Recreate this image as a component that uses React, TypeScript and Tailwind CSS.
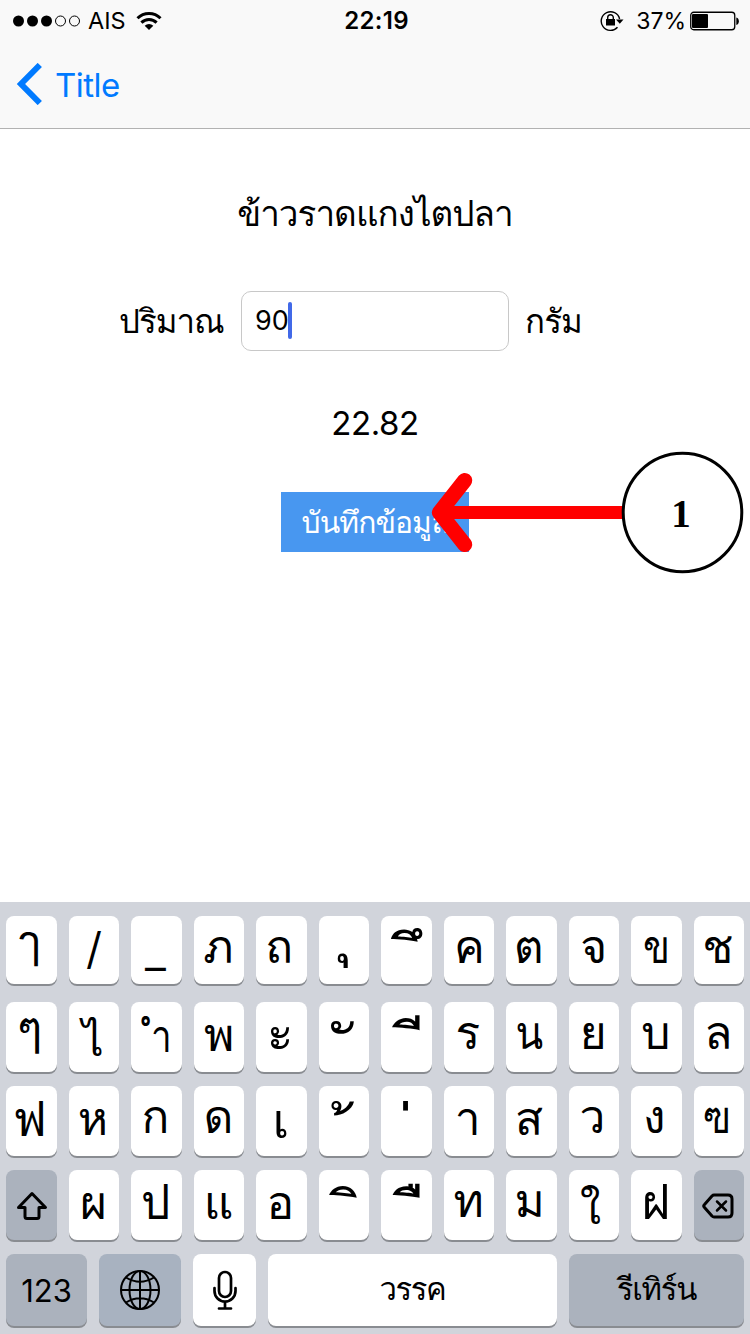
import React from "react";

type Glyph = { ch: string; dx: number; base: number; size: number; sx: number };

// ch, horizontal nudge from the key centre, baseline from the key top, font size, horizontal scale
const g = (ch: string, dx: number, base: number, size = 46, sx = 1): Glyph => ({ ch, dx, base, size, sx });

const rows: Glyph[][] = [
  [
    g("ๅ", -1.6, 42.3), g("/", 0.5, 52.5, 53, 0.7), g("_", 0.2, 46, 46, 0.78), g("ภ", 0, 47),
    g("ถ", -1.7, 47), g("\u00a0ุ", 0.4, 34.6, 65), g("\u00a0ึ", 8.9, 60.8, 58), g("ค", 1, 47),
    g("ต", -2.2, 47), g("จ", 0.5, 47), g("ข", 0.2, 47, 46, 0.86), g("ช", -0.5, 47),
  ],
  [
    g("ๆ", -1.2, 43.3, 48), g("ไ", -0.6, 54.5, 43), g("\u00a0ำ", 0.3, 49.8, 44, 0.84), g("พ", 0.9, 49.7),
    g("ะ", -0.6, 49.5, 50), g("\u00a0ั", 2.1, 69.6, 63), g("\u00a0ี", 10.9, 64.3, 60), g("ร", -0.4, 47.6),
    g("น", -2.1, 47.6, 46, 0.88), g("ย", -0.2, 47.6), g("บ", 0, 47.6), g("ล", 0.1, 47.6),
  ],
  [
    g("ฟ", -1.2, 49.7, 48), g("ห", -0.5, 49.4), g("ก", -0.5, 47.6), g("ด", 0.2, 47.6),
    g("เ", 0, 52.2, 49), g("\u00a0้", 0.1, 81.4, 62), g("\u00a0่", -1, 88, 70), g("า", -0.7, 49.8),
    g("ส", -1.8, 49.8), g("ว", -0.9, 47.6), g("ง", -1.6, 47.6), g("ฃ", -1.1, 47.6, 46, 0.86),
  ],
];
const lastRow: Glyph[] = [
  g("ผ", 0.2, 49.5), g("ป", -0.5, 49.7, 49, 0.94), g("แ", 0.3, 49.7), g("อ", -0.5, 49.5), g("\u00a0ิ", 10.4, 64.2, 60),
  g("\u00a0ื", 10.9, 64.2, 60), g("ท", 0.3, 47.6), g("ม", -1.3, 47.6), g("ใ", -2.8, 54.5, 43), g("ฝ", 0, 49.7, 49),
];

// Baseline of a zero-height line box set in Loma, as a share of the font size
const LOMA_BASELINE = 0.355;

function Key({ children, className = "" }: { children: React.ReactNode; className?: string }) {
  return (
    <div className={`flex justify-center rounded-lg shadow-[0_2px_0_#898c91] ${className}`}>{children}</div>
  );
}

function Letter({ glyph }: { glyph: Glyph }) {
  const dy = glyph.base - LOMA_BASELINE * glyph.size;
  return (
    <Key className="min-w-0 flex-1 items-start bg-white">
      <span
        className="whitespace-pre font-['Loma',sans-serif] leading-[0]"
        style={{ fontSize: glyph.size, transform: `translate(${glyph.dx - 0.4}px, ${dy}px) scaleX(${glyph.sx})` }}
      >
        {glyph.ch}
      </span>
    </Key>
  );
}

function StatusBar() {
  return (
    <div className="flex h-[41px] items-center text-[23.500px]">
      <div className="flex flex-1 items-center pl-[13px]">
        <svg width="67" height="12" viewBox="0 0 67 12">
          {[5.5, 19.5, 33.5].map((x) => (
            <circle key={x} cx={x} cy="6" r="5.5" />
          ))}
          {[47.5, 61.5].map((x) => (
            <circle key={x} cx={x} cy="6" r="5" fill="none" stroke="#000" />
          ))}
        </svg>
        <span className="ml-2">AIS</span>
        <svg className="ml-2.5" width="26" height="20" viewBox="0 0 26 20" fill="none" stroke="#000" strokeWidth="3">
          <path d="M1.5 7.2A16.3 16.3 0 0 1 24.5 7.2" />
          <path d="M5.4 11.6A10.7 10.7 0 0 1 20.6 11.6" />
          <path d="M8.7 14.8A6.2 6.2 0 0 1 17.3 14.8L13 19Z" fill="#000" stroke="none" />
        </svg>
      </div>
      <span className="pl-px text-[24px] font-semibold tracking-[0.3px]">22:19</span>
      <div className="flex flex-1 items-center justify-end pr-[11px]">
        <svg width="24" height="22" viewBox="0 0 24 22" fill="none" stroke="#000" strokeWidth="1.4">
          <path d="M17.5 17.2A9.3 9.3 0 1 1 19.6 9" />
          <path d="M16 9.5H23.5L19.8 13.7Z" fill="#000" stroke="none" />
          <rect x="6" y="9" width="9" height="6.5" fill="#000" stroke="none" />
          <path d="M7.7 9.5V7.5A2.8 2.8 0 0 1 13.3 7.5V9.5" />
        </svg>
        <span className="ml-3 pt-0.5 text-[23px]">37%</span>
        <svg className="ml-1" width="49" height="20" viewBox="0 0 49 20">
          <rect x="0.75" y="1.25" width="44" height="17.5" rx="3" fill="none" stroke="#000" strokeWidth="1.3" />
          <rect x="2" y="3" width="16" height="14" rx="1" />
          <path d="M46.3 6.5C49.7 7 49.7 13.5 46.3 14Z" />
        </svg>
      </div>
    </div>
  );
}

export default function App() {
  return (
    <div className="relative flex h-[1334px] w-[750px] flex-col overflow-hidden bg-white font-['Inter','Loma',sans-serif] text-black">
      <header className="h-[129px] border-b border-[#b2b2b2] bg-[#f9f9f9]">
        <StatusBar />
        <div className="flex h-[87px] items-center pl-4 text-[#007aff]">
          <svg className="mb-px" width="27" height="42" viewBox="0 0 27 42" fill="none" stroke="currentColor" strokeWidth="6">
            <path d="M23.800 2L5 21L23.800 40" />
          </svg>
          <span className="ml-3 pt-0.5 text-[33px] tracking-[-0.500px]">Title</span>
        </div>
      </header>

      <main className="flex flex-1 flex-col items-center">
        <h1 className="mt-[61px] text-[35px] leading-[46px] tracking-[-0.950px]">ข้าวราดแกงไตปลา</h1>
        <div className="mt-[55px] flex h-[60px] w-full items-center pl-[119px] text-[33px] tracking-[-0.800px]">
          <span className="w-[122px] pt-0.5 tracking-[-1px]">ปริมาณ</span>
          <div className="flex h-[60px] w-[268px] items-center rounded-[10px] border border-[#c8c8c8] pl-[13px] text-[27px] tracking-normal">
            90
            <span className="-ml-px mb-0.5 h-[37px] w-1 rounded-full bg-[#4169e8]" />
          </div>
          <span className="ml-4 pt-0.5">กรัม</span>
        </div>
        <div className="mt-[49px] text-[33px] leading-[46px] tracking-[-0.400px]">22.82</div>
        <button className="mt-[46px] h-[60px] w-[188px] bg-[#4897f0] text-[30px] tracking-[-0.900px] text-white">บันทึกข้อมูล</button>
      </main>

      <svg className="absolute left-[420px] top-[440px]" width="330" height="140" viewBox="420 440 330 140">
        <path d="M625 512.500H442" fill="none" stroke="#f00" strokeWidth="13" />
        <path d="M464.700 480.500L439.500 512.500L464.700 544.500" fill="none" stroke="#f00" strokeWidth="15" strokeLinecap="round" strokeLinejoin="round" />
        <circle cx="682.500" cy="512.500" r="59.300" fill="#fff" stroke="#000" strokeWidth="3" />
        <text x="681" y="527" textAnchor="middle" fontSize="39" fontWeight="700" fontFamily="Liberation Serif, serif">1</text>
      </svg>

      <section className="flex h-[432px] flex-col bg-[#d1d4db] px-1.5 pt-3.5">
        <div className="flex h-[68px] gap-3">{rows[0].map((k) => <Letter key={k.ch} glyph={k} />)}</div>
        <div className="mt-[18px] flex h-[70px] gap-3">{rows[1].map((k) => <Letter key={k.ch} glyph={k} />)}</div>
        <div className="mt-3.5 flex h-[70px] gap-3">{rows[2].map((k) => <Letter key={k.ch} glyph={k} />)}</div>
        <div className="mt-3.5 flex h-[70px] gap-3">
          <Key className="flex-1 items-center bg-[#abb2bd]">
            <svg className="mt-0.5 ml-0.5" width="32" height="30" viewBox="0 0 32 30" fill="none" stroke="#000" strokeWidth="3" strokeLinejoin="round">
              <path d="M16 2.500L29.500 16.500H23V25.500Q23 27.500 21 27.500H11Q9 27.500 9 25.500V16.500H2.500Z" />
            </svg>
          </Key>
          {lastRow.map((k) => <Letter key={k.ch} glyph={k} />)}
          <Key className="flex-1 items-center bg-[#abb2bd]">
            <svg className="mt-0.5 mr-0.5" width="32" height="26" viewBox="0 0 32 26" fill="none" stroke="#000" strokeWidth="3" strokeLinejoin="round" strokeLinecap="round">
              <path d="M12 2H26Q30 2 30 6V20Q30 24 26 24H12Q11 24 10 23L2.500 14.500Q1 13 2.500 11.500L10 3Q11 2 12 2Z" />
              <path d="M15 8.500L24 17.500M24 8.500L15 17.500" strokeWidth="2.500" />
            </svg>
          </Key>
        </div>
        <div className="mt-3.5 flex h-[72px] gap-3 text-[31px]">
          <Key className="w-[81px] items-center bg-[#abb2bd] pt-0.5">123</Key>
          <Key className="w-[82px] items-center bg-[#a8b2c0]">
            <svg width="40" height="40" viewBox="0 0 40 40" fill="none" stroke="#000" strokeWidth="2">
              <circle cx="20" cy="20" r="19" />
              <ellipse cx="20" cy="20" rx="10.500" ry="19" />
              <path d="M20 1V39M1 20H39M6 7.500Q20 16 34 7.500M6 32.500Q20 24 34 32.500" />
            </svg>
          </Key>
          <Key className="w-[63px] items-center bg-white">
            <svg width="24" height="40" viewBox="0 0 24 40" fill="none" stroke="#000" strokeWidth="2.700" strokeLinecap="round">
              <rect x="6" y="2" width="12" height="25" rx="6" />
              <path d="M1.500 18V21A10.500 10.500 0 0 0 22.500 21V18M12 31.500V38M6 38.500H18" />
            </svg>
          </Key>
          <Key className="w-[289px] items-center bg-white pb-0.5 tracking-[-1.400px]">วรรค</Key>
          <Key className="flex-1 items-center bg-[#abb2bd] pb-0.5 tracking-[-1.200px]">รีเทิร์น</Key>
        </div>
      </section>
    </div>
  );
}
